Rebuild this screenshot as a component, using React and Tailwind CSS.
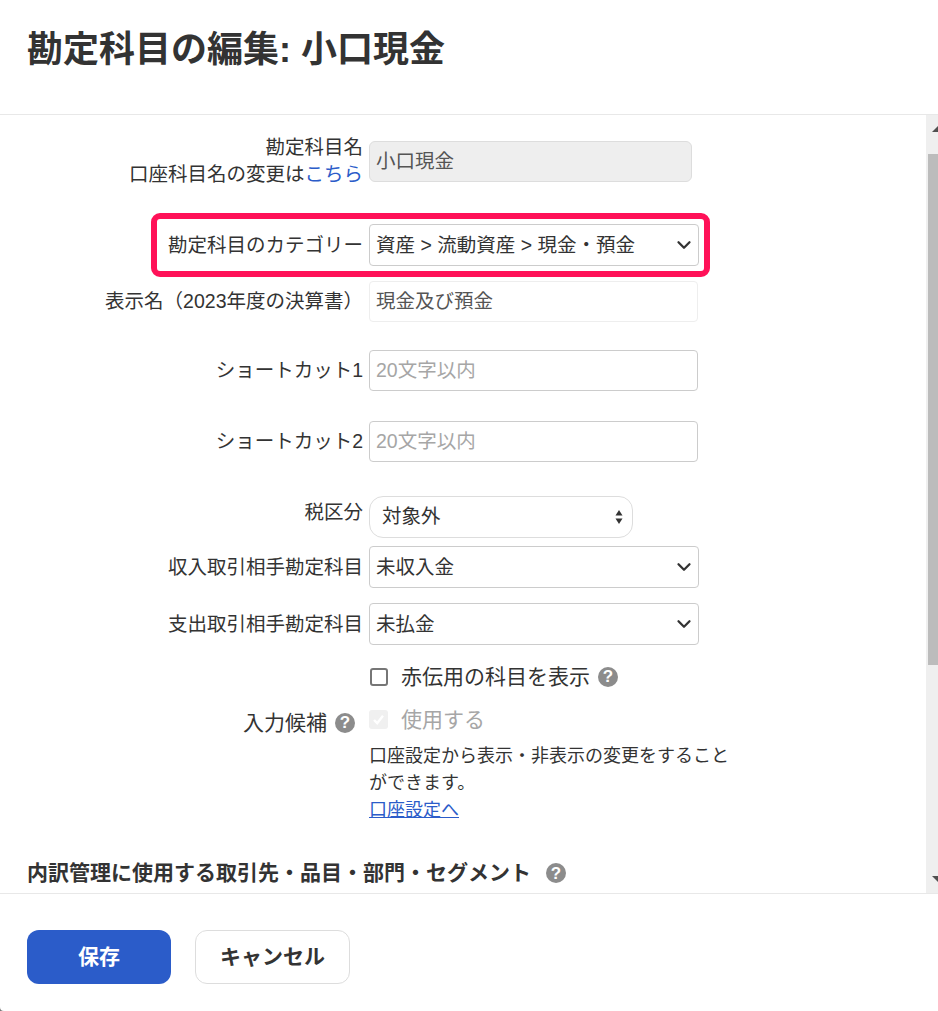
import React from "react";
import { ChevronDown } from "lucide-react";

const font = "font-['Liberation_Sans','Noto_Sans_CJK_JP',sans-serif]";

function Help({ className = "" }) {
  return (
    <span className={`inline-flex h-[20px] w-[20px] shrink-0 items-center justify-center rounded-full bg-[#8c8c8c] text-[17px] leading-none font-bold text-white ${className}`}>
      ?
    </span>
  );
}

function Row({ label, className = "", children }) {
  return (
    <div className={`relative flex items-center ${className}`}>
      <div className="w-[363px] shrink-0 text-right">{label}</div>
      <div className="ml-[6px] flex items-center">{children}</div>
    </div>
  );
}

function Select({ value }) {
  return (
    <div className="flex h-[42px] w-[330px] items-center justify-between rounded-[4px] border border-[#cccccc] bg-white pr-[3px] pl-[6px]">
      <span>{value}</span>
      <ChevronDown size={22} strokeWidth={2.5} className="text-[#333333]" />
    </div>
  );
}

function TextInput({ placeholder, value, light }) {
  return (
    <input
      readOnly
      placeholder={placeholder}
      value={value}
      className={`h-[41px] w-[329px] rounded-[4px] border bg-white px-[6px] text-[19.5px] outline-none placeholder:text-[#a6a6a6] ${light ? "border-[#eeeeee] pb-[4px] text-[#555555]" : "border-[#cccccc]"}`}
    />
  );
}

export default function App() {
  return (
    <div className="h-[1011px] w-[938px] bg-[#777777]">
      <div className={`flex h-full w-full flex-col overflow-hidden rounded-bl-[4px] bg-white text-[19.5px] leading-[27px] text-[#333333] ${font}`}>
        {/* Header */}
        <div className="h-[115px] shrink-0 border-b border-[#e8e8e8] pt-[28px] pl-[27px]">
          <h1 className="text-[36px] leading-[44px] font-bold">勘定科目の編集: 小口現金</h1>
        </div>

        {/* Body */}
        <div className="flex min-h-0 flex-1">
          <div className="min-w-0 flex-1 overflow-hidden">
            <Row
              className="mt-[26px]"
              label={
                <>
                  <div className="-mt-[7px]">勘定科目名</div>
                  <div>
                    口座科目名の変更は<a className="text-[#2b5cc9]">こちら</a>
                  </div>
                </>
              }
            >
              <div className="-mt-[6px] flex h-[41px] w-[323px] items-center rounded-[6px] border border-[#dddddd] bg-[#eeeeee] px-[6px] pb-[1px] text-[#555555]">
                小口現金
              </div>
            </Row>

            <Row className="mt-[36px]" label="勘定科目のカテゴリー">
              <Select value="資産 > 流動資産 > 現金・預金" />
              <div className="absolute -top-[11px] left-[151px] h-[64px] w-[559px] rounded-[9px] border-[6px] border-[#ff1158]" />
            </Row>

            <Row className="mt-[15px]" label="表示名（2023年度の決算書）">
              <TextInput light value="現金及び預金" />
            </Row>

            <Row className="mt-[28px]" label="ショートカット1">
              <TextInput placeholder="20文字以内" />
            </Row>

            <Row className="mt-[30px]" label="ショートカット2">
              <TextInput placeholder="20文字以内" />
            </Row>

            <div className="relative mt-[34px] flex items-start">
              <div className="w-[363px] shrink-0 pt-[3px] text-right">税区分</div>
              <div className="ml-[6px] flex h-[42px] w-[264px] items-center justify-between rounded-[14px] border border-[#dddddd] pr-[9px] pl-[12px]">
                <span className="-mt-[2px]">対象外</span>
                <svg width="8" height="16" viewBox="0 0 8 16" fill="#333333">
                  <path d="M4 1 L7.5 6.5 H0.5 Z" />
                  <path d="M4 15 L7.5 9.5 H0.5 Z" />
                </svg>
              </div>
            </div>

            <Row className="mt-[8px]" label="収入取引相手勘定科目">
              <Select value="未収入金" />
            </Row>

            <Row className="mt-[15px]" label="支出取引相手勘定科目">
              <Select value="未払金" />
            </Row>

            {/* Checkboxes */}
            <div className="mt-[18px] ml-[369px] flex h-[27px] items-center text-[21px]">
              <span className="ml-[1px] h-[18px] w-[18px] rounded-[3px] border-2 border-[#767676] bg-white" />
              <span className="ml-[13px]">赤伝用の科目を表示</span>
              <Help className="ml-[8px]" />
            </div>

            <div className="mt-[16px] flex">
              <div className="flex w-[363px] shrink-0 items-center justify-end self-start pt-[3px] pr-[8px] text-[21px]">
                <span>入力候補</span>
                <Help className="ml-[8px]" />
              </div>
              <div className="ml-[6px] w-[365px]">
                <div className="flex h-[27px] items-center text-[21px] text-[#a6a6a6]">
                  <span className="flex h-[19px] w-[19px] items-center justify-center rounded-[3px] bg-[#f0f0f0]">
                    <svg width="13" height="13" viewBox="0 0 13 13" fill="none" stroke="#ffffff" strokeWidth="2.4">
                      <path d="M2 7 L5.2 10.2 L11 2.8" />
                    </svg>
                  </span>
                  <span className="ml-[13px]">使用する</span>
                </div>
                <p className="mt-[10px] text-[18px] leading-[27px]">
                  口座設定から表示・非表示の変更をすることができます。
                </p>
                <a className="block text-[18px] leading-[26px] text-[#2b5cc9] underline">口座設定へ</a>
              </div>
            </div>

            <div className="mt-[36px] ml-[27px] flex items-center">
              <h2 className="text-[21px] leading-[28px] font-bold">内訳管理に使用する取引先・品目・部門・セグメント</h2>
              <Help className="ml-[15px]" />
            </div>
          </div>

          {/* Scrollbar */}
          <div className="flex w-[12px] shrink-0 flex-col bg-[#efefef]">
            <div className="flex h-[39px] shrink-0 justify-end pt-[11px]">
              <svg width="6" height="6" viewBox="0 0 6 6" fill="#505050">
                <path d="M6 0 V6 H0 Z" />
              </svg>
            </div>
            <div className="ml-[2px] h-[511px] shrink-0 bg-[#bcbcbc]" />
            <div className="flex flex-1 items-end justify-end pb-[11px]">
              <svg width="6" height="6" viewBox="0 0 6 6" fill="#505050">
                <path d="M0 0 H6 V6 Z" />
              </svg>
            </div>
          </div>
        </div>

        {/* Footer */}
        <div className="flex h-[118px] shrink-0 gap-[24px] border-t border-[#e8e8e8] pt-[36px] pl-[27px]">
          <button className="h-[54px] w-[144px] rounded-[12px] bg-[#2b5cc9] pb-[2px] text-[21px] font-bold text-white">保存</button>
          <button className="h-[54px] w-[155px] rounded-[12px] border border-[#dddddd] bg-white pb-[2px] text-[21px] font-bold">キャンセル</button>
        </div>
      </div>
    </div>
  );
}
